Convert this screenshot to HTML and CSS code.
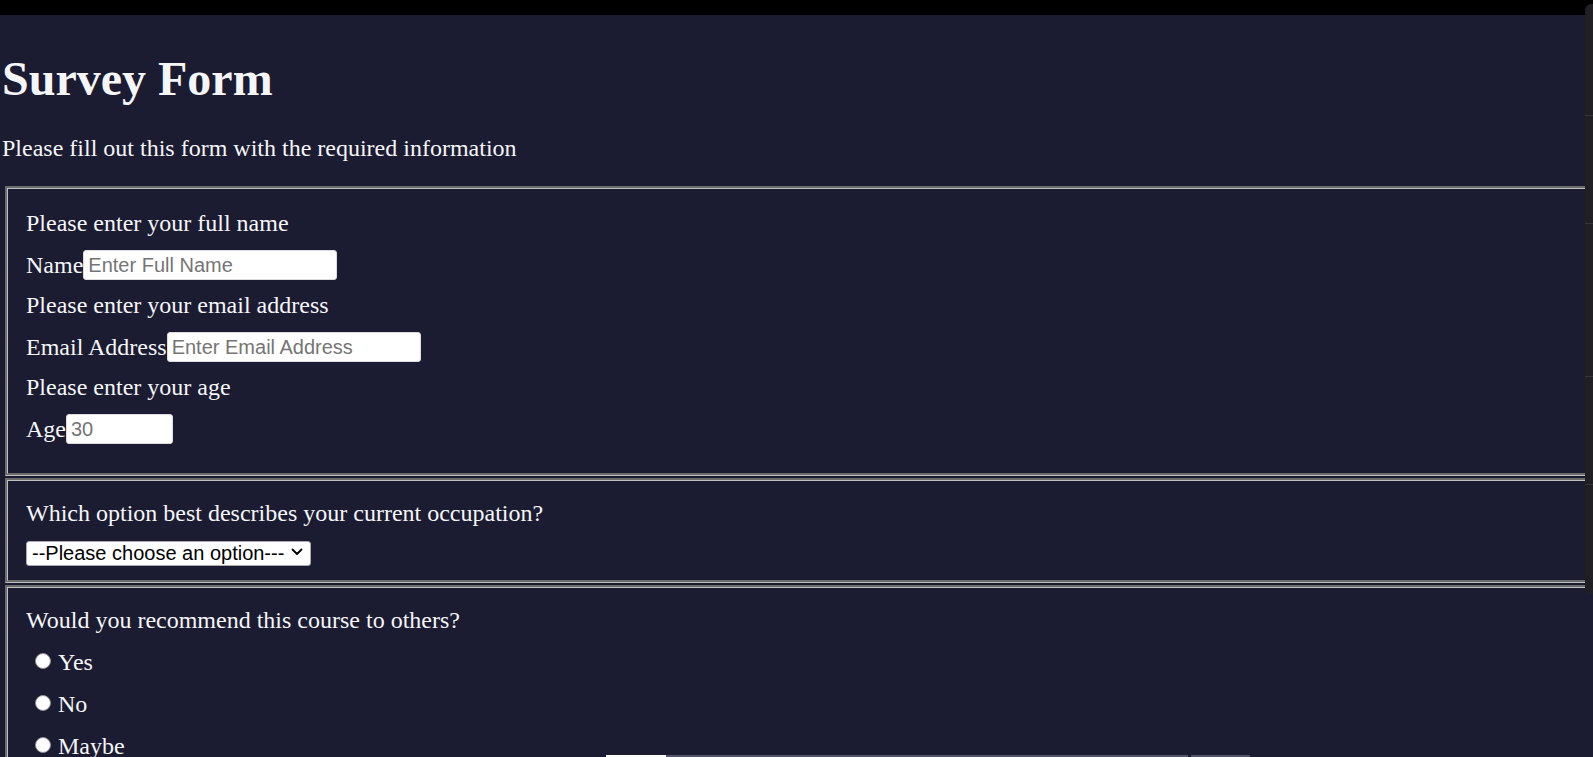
FILE: index.html
```html
<!DOCTYPE html>
<html lang="en">
<head>
<meta charset="utf-8">
<title>Survey Form</title>
<link rel="stylesheet" href="styles.css">
</head>
<body>
<div class="topbar"></div>
<main class="page">
  <h1 class="title" id="title">Survey Form</h1>
  <p class="description" id="description">Please fill out this form with the required information</p>
  <form class="survey" id="survey-form">
    <fieldset class="group group-personal">
      <div class="row">Please enter your full name</div>
      <div class="row row-input"><label for="name" id="name-label">Name</label><input class="field field-wide" id="name" type="text" placeholder="Enter Full Name"></div>
      <div class="row">Please enter your email address</div>
      <div class="row row-input"><label for="email" id="email-label">Email Address</label><input class="field field-wide" id="email" type="email" placeholder="Enter Email Address"></div>
      <div class="row">Please enter your age</div>
      <div class="row row-input"><label for="number" id="number-label">Age</label><input class="field field-narrow" id="number" type="number" placeholder="30"></div>
    </fieldset>
    <fieldset class="group group-occupation">
      <div class="row row-question">Which option best describes your current occupation?</div>
      <div class="select-wrap">
        <select class="dropdown" id="dropdown">
          <option>--Please choose an option---</option>
          <option>Student</option>
          <option>Full Time Job</option>
          <option>Prefer not to say</option>
        </select>
        <svg class="chevron" width="12" height="8" viewBox="0 0 12 8" aria-hidden="true"><path d="M1.5 1.5 L6 6 L10.5 1.5" fill="none" stroke="#000" stroke-width="1.8" stroke-linecap="round" stroke-linejoin="round"/></svg>
      </div>
    </fieldset>
    <fieldset class="group group-recommend">
      <div class="row">Would you recommend this course to others?</div>
      <label class="radio-row"><input class="radio" type="radio" name="recommend" value="yes"><span>Yes</span></label>
      <label class="radio-row"><input class="radio" type="radio" name="recommend" value="no"><span>No</span></label>
      <label class="radio-row"><input class="radio" type="radio" name="recommend" value="maybe"><span>Maybe</span></label>
    </fieldset>
  </form>
</main>
<div class="side-panel" aria-hidden="true">
  <div class="side-cell side-a"></div>
  <div class="side-cell side-b"></div>
  <div class="side-cell side-c"></div>
  <div class="side-cell side-d"></div>
  <div class="side-cell side-e"></div>
</div>
<div class="bottom-strip" aria-hidden="true">
  <div class="strip-white"></div>
  <div class="strip-gray"></div>
  <div class="strip-gap"></div>
  <div class="strip-gray2"></div>
</div>
</body>
</html>
```
FILE: styles.css
```css
html, body {
  margin: 0;
  padding: 0;
  height: 100%;
  overflow: hidden;
}

body {
  background: #1b1b32;
  color: #f5f6f7;
  font-family: "Liberation Serif", "Times New Roman", serif;
  font-size: 24px;
  position: relative;
}

.topbar {
  height: 15px;
  background: #000;
}

.page {
  padding-left: 2px;
}

.title {
  margin: 36px 0 0 0;
  font-size: 48px;
  line-height: 56px;
  font-weight: bold;
}

.description {
  margin: 27px 0 0 0;
  line-height: 28px;
}

.survey {
  margin-top: 24px;
}

.group {
  margin: 0 -30px 2px 3px;
  border: 3px groove #c0c0c0;
  padding: 20px 18px 18px 18px;
  min-width: 0;
}

.group-occupation {
  padding: 18px 18px 16px 18px;
}

.group-recommend {
  padding: 18px 18px 18px 18px;
}

.row {
  height: 41px;
  line-height: 28px;
  display: flex;
  align-items: baseline;
}

.row-input {
  align-items: flex-start;
}

.row-input label {
  line-height: 28px;
  margin-top: 1px;
}

.row-question {
  height: 40px;
}

.group-recommend .row {
  height: 41px;
}

.field {
  box-sizing: border-box;
  height: 30px;
  margin: 0;
  padding: 0 4px;
  border: 1px solid #dcdcdc;
  border-radius: 3px;
  background: #fff;
  color: #000;
  font-family: "Liberation Sans", Arial, sans-serif;
  font-size: 20px;
  line-height: 22px;
}

.field::placeholder {
  color: #757575;
}

.field-wide {
  width: 254px;
}

.field-narrow {
  width: 107px;
  -moz-appearance: textfield;
}

.field-narrow::-webkit-inner-spin-button,
.field-narrow::-webkit-outer-spin-button {
  -webkit-appearance: none;
  margin: 0;
}

.select-wrap {
  position: relative;
  display: block;
  width: 285px;
  height: 25px;
}

.dropdown {
  -webkit-appearance: none;
  appearance: none;
  box-sizing: border-box;
  width: 285px;
  height: 25px;
  margin: 0;
  padding: 0 0 0 5px;
  border: 1px solid #a9a9a9;
  border-radius: 3px;
  background: #fff;
  color: #000;
  font-family: "Liberation Sans", Arial, sans-serif;
  font-size: 20px;
  line-height: 23px;
}

.chevron {
  position: absolute;
  right: 8px;
  top: 9px;
  pointer-events: none;
}

.radio-row {
  height: 42px;
  display: flex;
  align-items: flex-start;
  line-height: 28px;
}

.radio-row span {
  margin-top: 1px;
}

.radio {
  -webkit-appearance: none;
  appearance: none;
  box-sizing: border-box;
  width: 16px;
  height: 16px;
  margin: 6px 7px 0 9px;
  border: 1px solid #8f8f8f;
  border-radius: 50%;
  background: #fff;
  flex: none;
}

.side-panel {
  position: absolute;
  top: 4px;
  right: 0;
  width: 8px;
  height: 591px;
  background: #1f1f24;
  border-radius: 6px 0 0 6px;
  display: flex;
  flex-direction: column;
}

.side-cell {
  border-top: 1px solid #34343a;
}

.side-a { height: 111px; border-top: none; }
.side-b { height: 107px; }
.side-c { height: 152px; }
.side-d { height: 107px; }
.side-e { flex: 1; }

.bottom-strip {
  position: absolute;
  left: 606px;
  bottom: 0;
  height: 2px;
  display: flex;
}

.strip-white { width: 60px; background: #ffffff; }
.strip-gray { width: 522px; background: #55556a; }
.strip-gap { width: 3px; }
.strip-gray2 { width: 59px; background: #55556a; }
```
